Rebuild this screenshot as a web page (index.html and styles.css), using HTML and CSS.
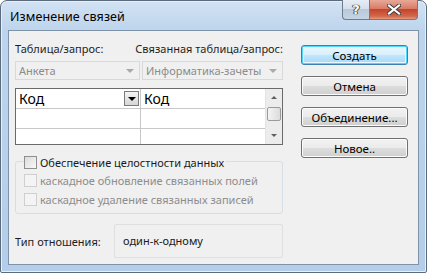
FILE: index.html
```html
<!DOCTYPE html>
<html lang="ru">
<head>
<meta charset="utf-8">
<link rel="stylesheet" href="styles.css">
</head>
<body>
<div class="window">
  <div class="titlebar">
    <div class="title">Изменение связей</div>
    <div class="caption-buttons">
      <div class="cap help"><span>?</span></div>
      <div class="cap close">
        <svg width="14" height="11" viewBox="0 0 14 11"><path d="M2 1.5 L12 9.5 M12 1.5 L2 9.5" stroke="#3a3a3a" stroke-width="4" stroke-linecap="square"/><path d="M2 1.5 L12 9.5 M12 1.5 L2 9.5" stroke="#fff" stroke-width="2.2" stroke-linecap="square"/></svg>
      </div>
    </div>
  </div>
  <div class="client">
    <div class="left">
      <div class="labels">
        <span class="lbl col1">Таблица/запрос:</span>
        <span class="lbl col2">Связанная таблица/запрос:</span>
      </div>
      <div class="combos">
        <div class="combo c1"><span>Анкета</span><i class="arr"></i></div>
        <div class="combo c2"><span>Информатика-зачеты</span><i class="arr"></i></div>
      </div>
      <div class="grid">
        <div class="cells">
          <div class="row">
            <div class="cell a first"><span>Код</span><span class="dd"><i></i></span></div>
            <div class="cell b"><span>Код</span></div>
          </div>
          <div class="row"><div class="cell a"></div><div class="cell b"></div></div>
          <div class="row last"><div class="cell a"></div><div class="cell b"></div></div>
        </div>
        <div class="vscroll">
          <div class="sbtn up"><i></i></div>
          <div class="thumb"></div>
          <div class="strack"></div>
          <div class="sbtn down"><i></i></div>
        </div>
      </div>
      <div class="group">
        <div class="chk main"><span class="box"></span><span>Обеспечение целостности данных</span></div>
        <div class="chk dis"><span class="box"></span><span>каскадное обновление связанных полей</span></div>
        <div class="chk dis"><span class="box"></span><span>каскадное удаление связанных записей</span></div>
      </div>
      <div class="reltype">
        <span class="lbl">Тип отношения:</span>
        <div class="relbox">один-к-одному</div>
      </div>
    </div>
    <div class="right">
      <button class="btn default">Создать</button>
      <button class="btn">Отмена</button>
      <button class="btn">Объединение...</button>
      <button class="btn">Новое..</button>
    </div>
  </div>
</div>
</body>
</html>
```

FILE: styles.css
```css
html, body { margin: 0; padding: 0; background: #ffffff; }
body { font-family: "Noto Sans", "Open Sans", sans-serif; font-size: 11px; color: #000; white-space: nowrap; }

.window {
  width: 427px; height: 273px; box-sizing: border-box;
  border: 1px solid #5b6b7d; border-radius: 7px 7px 2px 2px;
  background: linear-gradient(#d2e2f3 0px, #bdd4ec 30px, #b4cde8 100%);
  display: flex; flex-direction: column;
  box-shadow: inset 0 0 0 1px #e6f0fa;
}
.titlebar { height: 29px; display: flex; align-items: flex-start; flex-shrink: 0; }
.title { padding: 7px 0 0 9px; font-size: 12.5px; color: #000; letter-spacing: 0.1px; }
.caption-buttons { margin-left: auto; margin-right: 8px; display: flex; margin-top: -1px; }
.cap { height: 20px; display: flex; align-items: center; justify-content: center; box-sizing: border-box; border: 1px solid #6d7b8d; border-top: none; }
.help { width: 27px; border-radius: 0 0 0 4px; border-right: none;
  background: linear-gradient(#e6edf5 0%, #d5e0ec 45%, #b9c9da 50%, #c6d5e5 100%); }
.help span { font-family: "DejaVu Sans", sans-serif; font-size: 13px; color: #fff; font-weight: bold; text-shadow: 0 0 1px #333, 0 0 1px #333, 1px 0 0 #555, -1px 0 0 #555; }
.close { width: 49px; border-radius: 0 0 4px 0;
  background: linear-gradient(#e8a998 0%, #d97b66 45%, #c4452b 50%, #d2664a 85%, #e59a7c 100%); }

.client {
  margin: 0 7px 7px 7px; flex: 1; box-sizing: border-box;
  background: #f0f0f0; border: 1px solid #7e92aa;
  display: flex; padding: 0 0 0 6px;
}
.left { width: 268px; display: flex; flex-direction: column; }
.labels { display: flex; height: 14px; margin-top: 11px; line-height: 14px; }
.lbl { color: #1e1e1e; }
.col1 { width: 127px; }
.combos { display: flex; margin-top: 5px; gap: 2px; }
.combo { height: 19px; box-sizing: border-box; border: 1px solid #d9d9d9; background: #f0f0f0;
  display: flex; align-items: center; padding-left: 3px; color: #8b8b8b; }
.combo span { flex: 1; }
.c1 { width: 125px; }
.c2 { width: 141px; }
.arr { width: 0; height: 0; border-left: 4px solid transparent; border-right: 4px solid transparent; border-top: 4px solid #a9a9a9; margin-right: 5px; }

.grid { margin-top: 8px; height: 57px; box-sizing: border-box; border: 1px solid #6a6a6a; background: #fff; display: flex; }
.cells { flex: 1; display: flex; flex-direction: column; }
.row { display: flex; height: 19px; border-bottom: 1px solid #c8c8c8; }
.row.last { border-bottom: none; flex: 1; }
.cell { display: flex; align-items: center; font-size: 14px; }
.cell.a { width: 121px; border-right: 1px solid #c8c8c8; padding-left: 3px; }
.cell.b { flex: 1; padding-left: 3px; }
.cell.first span:first-child { flex: 1; }
.dd { width: 15px; height: 15px; box-sizing: border-box; border: 1px solid #7a7a7a; background: linear-gradient(#f4f4f4, #d6d6d6); display: flex; align-items: center; justify-content: center; margin-right: 1px; }
.dd i { width: 0; height: 0; border-left: 4px solid transparent; border-right: 4px solid transparent; border-top: 4px solid #000; }
.vscroll { width: 16px; background: #ececec; border-left: 1px solid #e3e3e3; display: flex; flex-direction: column; }
.sbtn { height: 17px; display: flex; align-items: center; justify-content: center; }
.sbtn i { width: 0; height: 0; border-left: 3px solid transparent; border-right: 3px solid transparent; }
.up i { border-bottom: 3px solid #5f5f5f; }
.down i { border-top: 3px solid #5f5f5f; }
.thumb { height: 14px; margin: 1px 1px 0 1px; box-sizing: border-box; border: 1px solid #9a9a9a; border-radius: 2px; background: linear-gradient(90deg, #f4f4f4, #dcdcdc); }
.strack { flex: 1; }

.group { margin-top: 16px; height: 53px; box-sizing: border-box; border: 1px solid #d5dfe5; border-radius: 3px; position: relative; padding: 0 0 0 8px; display: flex; flex-direction: column; }
.chk { display: flex; align-items: center; height: 18px; }
.chk .box { width: 11px; height: 11px; border: 1px solid #8f8f8f; background: linear-gradient(135deg, #dcdcdc, #f8f8f8); margin-right: 3px; }
.chk.main { margin-top: -9px; background: #f0f0f0; align-self: flex-start; padding-right: 2px; color: #1a1a1a; }
.chk.dis { color: #8d8d8d; }
.chk.dis .box { border-color: #cfcfcf; background: #f4f4f4; }
.chk.dis + .chk.dis { margin-top: 1px; }

.reltype { display: flex; align-items: center; margin-top: 10px; }
.reltype .lbl { width: 99px; }
.relbox { width: 169px; height: 34px; box-sizing: border-box; border: 1px solid #dfdfdf; border-radius: 2px; padding: 8px 0 0 8px; color: #1a1a1a; }

.right { margin-left: 18px; padding-top: 14px; display: flex; flex-direction: column; gap: 11px; }
.btn {
  width: 107px; height: 20px; box-sizing: border-box; margin: 0; padding: 0;
  font-family: "Noto Sans", "Open Sans", sans-serif; font-size: 11.5px; color: #000;
  border: 1px solid #707070; border-radius: 3px;
  background: linear-gradient(#f2f2f2 0%, #ebebeb 48%, #dddddd 52%, #cfcfcf 100%);
  box-shadow: inset 0 0 0 1px #fcfcfc;
}
.btn.default { border-color: #3c7fb1; box-shadow: inset 0 0 0 1px #4fd6fd, inset 0 0 0 2px #e8f6fd; background: linear-gradient(#eaf6fd 0%, #d9f0fc 48%, #bee6fd 52%, #a7d9f5 100%); }
```
